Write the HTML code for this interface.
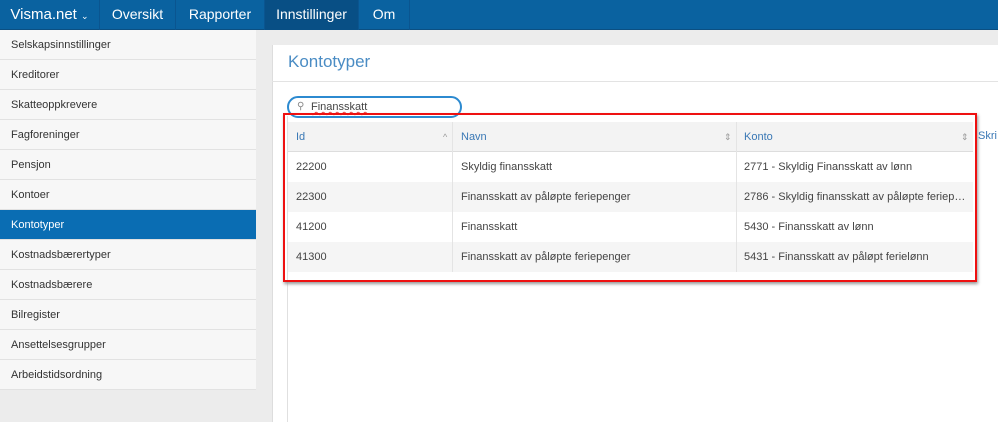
<!DOCTYPE html>
<html><head><meta charset="utf-8"><style>
*{margin:0;padding:0;box-sizing:border-box}
body{width:998px;height:422px;overflow:hidden;background:#ececec;font-family:"Liberation Sans",sans-serif;position:relative;color:#444}
.nav{position:absolute;left:0;top:0;width:998px;height:30px;background:#0a62a0;border-bottom:1px solid #0b4f82}
.nav div{position:absolute;top:0;height:30px;line-height:29px;color:#fff;font-size:14px;text-align:center;border-right:1px solid #0a5590}
.side{position:absolute;left:0;top:30px;width:256px;height:360px;background:#f7f7f7}
.side div{height:30px;line-height:30px;padding-left:11px;font-size:11px;color:#333;border-bottom:1px solid #e2e2e2}
.side .act{background:#0a6db3;color:#fff}
.panel{position:absolute;left:272px;top:45px;width:726px;height:377px;background:#fff;border-left:1px solid #ddd}
.title{position:absolute;left:288px;top:52px;font-size:17px;color:#4a8cc4}
.hr{position:absolute;left:272px;top:81px;width:726px;height:1px;background:#e3e3e3}
.vl{position:absolute;left:287px;top:116px;width:1px;height:306px;background:#e0e0e0}
.search{position:absolute;left:287px;top:96px;width:175px;height:22px;border:2px solid #2c8ad0;border-radius:11px;font-size:11px;padding-left:22px;line-height:18px}
.tbl{position:absolute;left:283px;top:113px;width:694px;height:169px;border:2px solid #e11;box-shadow:1px 2px 3px #999}
.row{position:absolute;left:288px;width:685px;height:30px;font-size:11px;line-height:30px}
.row span{position:absolute;top:0;white-space:nowrap}
.hdr{top:122px;background:#f3f3f3;color:#3a78b5;border-bottom:1px solid #ddd}
.c1{left:8px}.c2{left:173px}.c3{left:456px;width:225px;overflow:hidden;text-overflow:ellipsis}
.sep{position:absolute;top:122px;width:1px;height:150px;background:#e4e4e4}
</style></head><body>
<div class="nav">
<div style="left:0;width:100px;font-size:15px">Visma.net <span style="font-size:9px">&#8964;</span></div>
<div style="left:100px;width:76px">Oversikt</div>
<div style="left:176px;width:89px">Rapporter</div>
<div style="left:265px;width:94px;background:#084f85">Innstillinger</div>
<div style="left:359px;width:51px">Om</div>
</div>
<div class="side">
<div>Selskapsinnstillinger</div><div>Kreditorer</div><div>Skatteoppkrevere</div><div>Fagforeninger</div><div>Pensjon</div><div>Kontoer</div><div class="act">Kontotyper</div><div>Kostnadsbærertyper</div><div>Kostnadsbærere</div><div>Bilregister</div><div>Ansettelsesgrupper</div><div>Arbeidstidsordning</div>
</div>
<div class="panel"></div>
<div class="title">Kontotyper</div>
<div class="hr"></div>
<div class="vl"></div>
<div class="search"><span style="position:absolute;left:8px;top:0;color:#888;font-size:10px">&#9906;</span><span style="text-decoration:underline wavy #e44;text-decoration-thickness:1px">Finansskatt</span></div>
<div class="tbl"></div>
<div class="row hdr"><span class="c1">Id</span><span style="left:155px;font-size:9px;color:#999">^</span><span class="c2">Navn</span><span style="left:436px;font-size:9px;color:#999">&#8661;</span><span class="c3">Konto</span><span style="left:673px;font-size:9px;color:#999">&#8661;</span></div>
<div style="position:absolute;left:978px;top:130px;font-size:11px;color:#3a78b5">Skri</div>
<div class="row" style="top:152px;background:#fff"><span class="c1">22200</span><span class="c2">Skyldig finansskatt</span><span class="c3">2771 - Skyldig Finansskatt av lønn</span></div>
<div class="row" style="top:182px;background:#f5f5f5"><span class="c1">22300</span><span class="c2">Finansskatt av påløpte feriepenger</span><span class="c3">2786 - Skyldig finansskatt av påløpte feriepenger</span></div>
<div class="row" style="top:212px;background:#fff"><span class="c1">41200</span><span class="c2">Finansskatt</span><span class="c3">5430 - Finansskatt av lønn</span></div>
<div class="row" style="top:242px;background:#f5f5f5"><span class="c1">41300</span><span class="c2">Finansskatt av påløpte feriepenger</span><span class="c3">5431 - Finansskatt av påløpt ferielønn</span></div>
<div class="sep" style="left:452px"></div><div class="sep" style="left:736px"></div>
</body></html>
